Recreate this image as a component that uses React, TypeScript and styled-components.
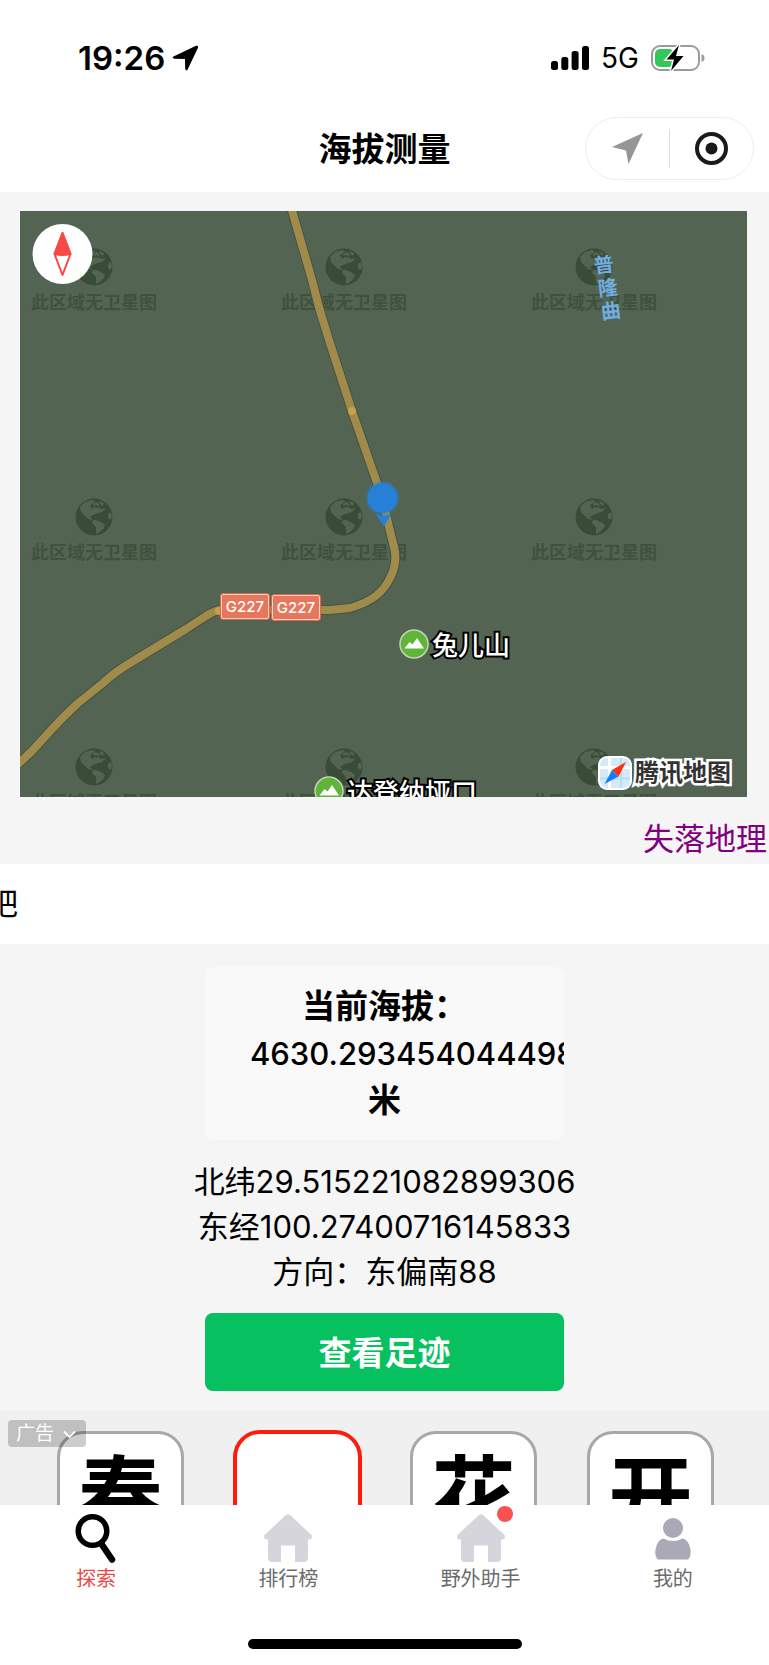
import React from 'react';
import styled, { createGlobalStyle } from 'styled-components';

const GlobalStyle = createGlobalStyle`
  * { box-sizing: border-box; }
  body {
    margin: 0;
    background: #fff;
    color: #000;
    font-family: Inter, "Noto Sans CJK SC", sans-serif;
  }
  button { font-family: inherit; border: 0; padding: 0; margin: 0; background: none; color: inherit; }
  a { color: inherit; text-decoration: none; }
  svg { display: block; }
`;

const Page = styled.div`
  background: #f5f5f5;
  overflow: hidden;
`;

const Header = styled.header`
  background: #fff;
  padding: 36px 15px 12px;
`;

const StatusBar = styled.div`
  display: flex;
  justify-content: space-between;
  align-items: center;
  height: 44px;
  padding: 0 49px 0 63px;
`;

const StatusGroup = styled.div<{ $gap: number }>`
  display: flex;
  align-items: center;
  gap: ${(p) => p.$gap}px;
`;

const Clock = styled.span`
  font-size: 33px;
  font-weight: 600;
`;

const Network = styled.span`
  font-size: 28px;
`;

const NavBar = styled.div`
  display: grid;
  grid-template-columns: 1fr auto 1fr;
  align-items: center;
  margin-top: 37px;
`;

const Title = styled.h1`
  grid-column: 2;
  margin: 0;
  font-size: 33px;
  line-height: 48px;
  font-weight: 700;
`;

const Capsule = styled.div`
  justify-self: end;
  display: flex;
  align-items: center;
  width: 169px;
  height: 63px;
  border: 1px solid #ededed;
  border-radius: 32px;
`;

const CapsuleButton = styled.button`
  flex: 1;
  display: flex;
  justify-content: center;
  & + & { border-left: 1px solid #dedede; padding: 3px 0; }
`;

const MapPanel = styled.section`
  position: relative;
  height: 586px;
  margin: 19px 22px 0 20px;
  overflow: hidden;
  background: #536552;
`;

const Layer = styled.svg`
  position: absolute;
  left: 0;
  top: 0;
`;

const Pin = styled.div<{ $x: number; $y: number }>`
  position: absolute;
  left: ${(p) => p.$x}px;
  top: ${(p) => p.$y}px;
  display: flex;
  align-items: center;
  white-space: nowrap;
`;

const Watermark = styled(Pin)`
  flex-direction: column;
  gap: 3px;
  width: 134px;
  color: #3e523e;
  font-size: 18px;
  line-height: 28px;
  font-weight: 700;
`;

const RoadBadge = styled(Pin)`
  justify-content: center;
  width: 50px;
  height: 27px;
  background: #e7775c;
  border: 1px solid #e26546;
  border-radius: 3px;
  box-shadow: inset 0 0 0 1px #f8d6cc;
  color: #fff;
  font-size: 15px;
  font-weight: 500;
`;

const River = styled(Pin)`
  flex-direction: column;
  color: #70ade2;
  font-size: 20px;
  line-height: 23px;
  font-weight: 700;
`;

const RiverChar = styled.span<{ $shift: number }>`
  transform: translateX(${(p) => p.$shift}px) rotate(-7deg);
`;

const PoiLabel = styled.span`
  margin-left: 3px;
  padding-top: 5px;
  color: #fff;
  font-size: 26px;
  line-height: 36px;
  font-weight: 500;
  -webkit-text-stroke: 4px #000;
  paint-order: stroke fill;
`;

const Attribution = styled.a`
  position: absolute;
  right: 16px;
  bottom: 6px;
  display: flex;
  align-items: center;
  gap: 3px;
  color: #333;
  font-size: 24px;
  line-height: 36px;
  font-weight: 700;
  -webkit-text-stroke: 5px #fff;
  paint-order: stroke fill;
`;

const Ticker = styled.div`
  display: flex;
  justify-content: flex-end;
  padding: 20px 2px 3px 0;
  color: #800080;
  font-size: 31px;
  line-height: 44px;
`;

const Notice = styled.div`
  display: flex;
  align-items: center;
  height: 80px;
  padding-bottom: 5px;
  background: #fff;
  overflow: hidden;
  font-size: 31px;
`;

const NoticeText = styled.span`
  margin-left: -13px;
`;

const Readings = styled.main`
  display: flex;
  flex-direction: column;
  align-items: center;
  padding: 23px 0 20px;
`;

const Altitude = styled.div`
  width: 359px;
  padding: 16px 45px;
  overflow: hidden;
  border-radius: 8px;
  background: #f9f9f9;
  text-align: center;
  font-size: 33px;
  line-height: 47px;
  font-weight: 700;
`;

const AltitudeValue = styled.span`
  display: block;
  font-size: 31px;
  font-weight: 500;
`;

const Coordinates = styled.div`
  margin: 19px 0;
  text-align: center;
  font-size: 31px;
  line-height: 45px;
`;

const TrackButton = styled.button`
  width: 359px;
  height: 78px;
  padding-bottom: 2px;
  border-radius: 8px;
  background: #07c160;
  color: #fff;
  font-size: 33px;
  font-weight: 700;
`;

const Advert = styled.section`
  position: relative;
  height: 94px;
  overflow: hidden;
  background: #f0f0f0;
`;

const Tiles = styled.div`
  display: flex;
  justify-content: space-between;
  padding: 20px 55px 0 57px;
`;

const Tile = styled.div<{ $active?: boolean }>`
  width: 127px;
  height: 127px;
  border: 3px solid #a8a8a8;
  border-radius: 26px;
  background: #fff;
  text-align: center;
  font-size: 84px;
  line-height: 124px;
  font-weight: 700;
  ${(p) => p.$active && 'border-color: #fd1d0d; box-shadow: 0 0 0 1px #fd1d0d;'}
`;

const AdBadge = styled.button`
  position: absolute;
  left: 8px;
  top: 9px;
  display: flex;
  align-items: center;
  gap: 9px;
  height: 27px;
  padding: 0 10px 0 8px;
  border-radius: 4px;
  background: rgba(0, 0, 0, 0.2);
  color: #fff;
  font-size: 19px;
  line-height: 27px;
`;

const Footer = styled.footer`
  background: #fff;
  padding-bottom: 16px;
`;

const TabBar = styled.nav`
  display: grid;
  grid-template-columns: repeat(4, 1fr);
`;

const Tab = styled.a<{ $active?: boolean }>`
  display: flex;
  flex-direction: column;
  align-items: center;
  padding-top: 8px;
  color: ${(p) => (p.$active ? '#f04545' : '#6b6b6b')};
  font-size: 20px;
  line-height: 32px;
`;

const TabIcon = styled.span`
  position: relative;
`;

const Dot = styled.span`
  position: absolute;
  left: 41px;
  top: -7px;
  width: 16px;
  height: 16px;
  border-radius: 8px;
  background: #fa5151;
`;

const HomeIndicator = styled.div`
  width: 274px;
  height: 10px;
  margin: 44px auto 0;
  border-radius: 5px;
  background: #000;
`;

const Globe = () => (
  <svg width="38" height="38" viewBox="0 0 38 38">
    <circle cx="19" cy="19" r="18.5" fill="#384c38" />
    <path
      fill="#536552"
      d="M5 9 10 4 17 2 20 3 18 5 22 4 25 7 23 8 26 11 31 10 27 14 23 15 18 17 15 19 18 22 21 22 26 24 30 27 29 30 25 34 21 36 21 29 17 25 18 22 13 21 9 17 6 14zM24 3 29 5 28 8 25 6zM33 16 36 14 37 19 35 22 33 20z"
    />
    <path fill="#384c38" d="M15 7 19 5 18 8 22 7 24 10 20 9 17 11z" />
  </svg>
);

const PoiIcon = () => (
  <svg width="30" height="30" viewBox="0 0 30 30">
    <circle cx="15" cy="15" r="14" fill="#60b538" stroke="#c0d4ba" strokeWidth="1.5" />
    <path d="M5.500 19.500 10.500 13l3 2.500L18 9l7 10.500z" fill="#fff" />
  </svg>
);

const HomeIcon = () => (
  <svg width="50" height="50" viewBox="0 0 50 50" fill="#d6d5dd">
    <path d="M23 2q2-1.700 4 0l21.500 20q1.500 4-1.500 4.500h-2V45q0 4-4 4h-9V33.500q0-1-1-1H19q-1 0-1 1V49H9q-4 0-4-4V26.500H3Q0 26 1.500 22z" />
  </svg>
);

const columns = [7, 257, 507];
const rows = [37, 287, 537];
const road =
  'M271-4 292 69Q299 99 309 129L332 200 356 269Q365 296 369 316L374 336Q378 352 370 367 366 376 357 384 347 392 330 397L310 399H250L200 399Q196 399 186 405L166 418 110 452Q95 461 83 472L57 493Q44 505 33 517L12 540-4 555';

export default function App() {
  return (
    <>
      <GlobalStyle />
      <Page>
        <Header>
          <StatusBar>
            <StatusGroup $gap={7}>
              <Clock>19:26</Clock>
              <svg width="27" height="26" viewBox="0 0 27 26">
                <path d="M1.500 11.500 24 .8q2.500-.6 2 2L15.600 24.500q-1.600 2.200-2.400-.7L13 14 2.500 13.800Q-.7 13 1.500 11.500z" />
              </svg>
            </StatusGroup>
            <StatusGroup $gap={12}>
              <svg width="38" height="25" viewBox="0 0 38 25">
                <rect y="15" width="7" height="9" rx="2.500" />
                <rect x="10.300" y="11" width="7" height="13" rx="2.500" />
                <rect x="20.600" y="5" width="7" height="19" rx="2.500" />
                <rect x="31" width="7" height="24" rx="2.500" />
              </svg>
              <Network>5G</Network>
              <svg width="54" height="28" viewBox="0 0 54 28">
                <rect x="1" y="2" width="47" height="24" rx="8" fill="none" stroke="#9b9b9b" strokeWidth="2" />
                <path d="M50.500 10q3 1 3 4t-3 4z" fill="#9b9b9b" />
                <rect x="4" y="5" width="19" height="18" rx="5" fill="#34c759" />
                <path d="M28 1 15.500 15.500H23L20 27 32.500 12H25z" stroke="#fff" strokeWidth="3" />
                <path d="M28 1 15.500 15.500H23L20 27 32.500 12H25z" />
              </svg>
            </StatusGroup>
          </StatusBar>
          <NavBar>
            <Title>海拔测量</Title>
            <Capsule>
              <CapsuleButton aria-label="位置">
                <svg width="31" height="33" viewBox="0 0 31 33">
                  <path d="M31 1 16.500 32 14 18.500 0 15z" fill="#969696" />
                </svg>
              </CapsuleButton>
              <CapsuleButton aria-label="关闭">
                <svg width="33" height="33" viewBox="0 0 33 33">
                  <circle cx="16.500" cy="16.500" r="14.500" fill="none" stroke="#1a1a1a" strokeWidth="4" />
                  <circle cx="16.500" cy="16.500" r="6" fill="#1a1a1a" />
                </svg>
              </CapsuleButton>
            </Capsule>
          </NavBar>
        </Header>

        <MapPanel aria-label="地图">
          {rows.map((y) =>
            columns.map((x) => (
              <Watermark key={`${x}-${y}`} $x={x} $y={y}>
                <Globe />
                <span>此区域无卫星图</span>
              </Watermark>
            )),
          )}
          <Layer width="727" height="586" viewBox="0 0 727 586">
            <g fill="none" strokeLinejoin="round">
              <path d={road} stroke="#465344" strokeWidth="10" />
              <path d={road} stroke="#a08b4a" strokeWidth="8" />
            </g>
            <circle cx="332" cy="200" r="4" fill="#c9a048" />
            <circle cx="199" cy="400" r="4" fill="#c9a048" />
            <circle cx="362.500" cy="287" r="17" fill="#2680d8" opacity=".35" />
            <circle cx="362.500" cy="287" r="15" fill="#2680d8" />
            <path d="M355.500 303q8 3 16 0L364 315.500z" fill="#2680d8" />
            <circle cx="42.500" cy="43" r="30" fill="#fff" />
            <path d="M42.500 22 50.500 43 42.500 64 34.500 43z" fill="#fff" stroke="#f94848" strokeWidth="2" strokeLinejoin="round" />
            <path d="M42.500 22 50.500 43Q42.500 45 34.500 43z" fill="#f94848" stroke="#f94848" strokeWidth="2" strokeLinejoin="round" />
          </Layer>
          <River $x={574} $y={43}>
            <RiverChar $shift={0}>普</RiverChar>
            <RiverChar $shift={4}>隆</RiverChar>
            <RiverChar $shift={7}>曲</RiverChar>
          </River>
          <RoadBadge $x={200} $y={382}>G227</RoadBadge>
          <RoadBadge $x={251} $y={383}>G227</RoadBadge>
          <Pin $x={379} $y={412}>
            <PoiIcon />
            <PoiLabel>兔儿山</PoiLabel>
          </Pin>
          <Pin $x={294} $y={559}>
            <PoiIcon />
            <PoiLabel>达登纳垭口</PoiLabel>
          </Pin>
          <Attribution href="#map">
            <svg width="34" height="34" viewBox="0 0 34 34">
              <rect width="34" height="34" rx="9" fill="#fff" />
              <rect x="2" y="2" width="30" height="30" rx="7" fill="#d6e9f9" />
              <path d="M11.500 2v30M2 11.500h30" stroke="#fff" strokeWidth="3" />
              <path d="M23 2v30M2 22.500h30" stroke="#b5e0ee" strokeWidth="2" />
              <path d="M28 6 14 14 20.500 20.500z" fill="#ff2c10" />
              <path d="M6.500 28 14 14 20.500 20.500z" fill="#147dff" />
            </svg>
            腾讯地图
          </Attribution>
        </MapPanel>

        <Ticker>失落地理</Ticker>
        <Notice>
          <NoticeText>吧</NoticeText>
        </Notice>

        <Readings>
          <Altitude>
            当前海拔：
            <AltitudeValue>4630.293454044498</AltitudeValue>
            米
          </Altitude>
          <Coordinates>
            <div>北纬29.515221082899306</div>
            <div>东经100.27400716145833</div>
            <div>方向：东偏南88</div>
          </Coordinates>
          <TrackButton>查看足迹</TrackButton>
        </Readings>

        <Advert>
          <Tiles>
            <Tile>春</Tile>
            <Tile $active />
            <Tile>花</Tile>
            <Tile>开</Tile>
          </Tiles>
          <AdBadge>
            广告
            <svg width="13" height="8" viewBox="0 0 13 8">
              <path d="M1 1.500 6.500 7 12 1.500" fill="none" stroke="#fff" strokeWidth="1.800" />
            </svg>
          </AdBadge>
        </Advert>

        <Footer>
          <TabBar>
            <Tab href="#explore" $active>
              <svg width="50" height="50" viewBox="0 0 50 50" fill="none" stroke="#000">
                <circle cx="21.500" cy="18" r="14.300" strokeWidth="5.500" />
                <path d="M30.500 31 41 46.500" strokeWidth="6.500" strokeLinecap="round" />
              </svg>
              探索
            </Tab>
            <Tab href="#rank">
              <HomeIcon />
              排行榜
            </Tab>
            <Tab href="#helper">
              <TabIcon>
                <HomeIcon />
                <Dot />
              </TabIcon>
              野外助手
            </Tab>
            <Tab href="#me">
              <svg width="50" height="50" viewBox="0 0 50 50" fill="#a9a9b7">
                <circle cx="25" cy="15" r="10" />
                <path d="M15.500 25.500q9.500 5 19 0 6 1 8 11 .7 7-2.500 10H10q-3.500-3-2.500-10 2-10 8-11z" />
              </svg>
              我的
            </Tab>
          </TabBar>
          <HomeIndicator />
        </Footer>
      </Page>
    </>
  );
}
